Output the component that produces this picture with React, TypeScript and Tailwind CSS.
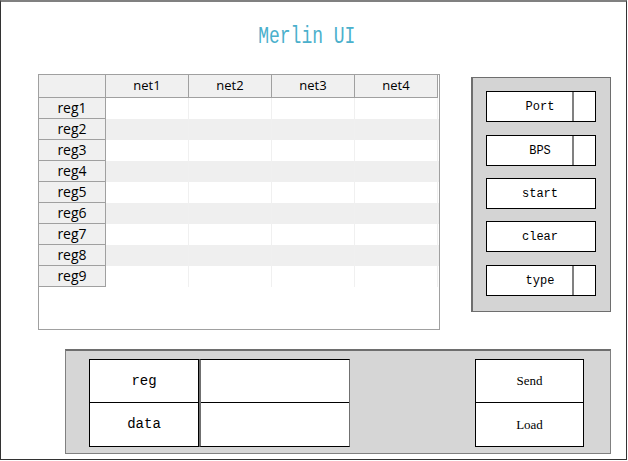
import React from "react";

const cols = ["net1", "net2", "net3", "net4"];
const rows = ["reg1", "reg2", "reg3", "reg4", "reg5", "reg6", "reg7", "reg8", "reg9"];

const mono = { fontFamily: '"Liberation Mono", "DejaVu Sans Mono", monospace' };

// side button, optional little box on the right
const SideButton = ({ label, box, className = "" }: { label: string; box?: boolean; className?: string }) => (
  <div
    className={`relative w-[110px] h-[31px] bg-white border border-black flex items-center justify-center text-[12px] text-black ${className}`}
  >
    <span className="pr-[2px]">{label}</span>
    {box && (
      <div className="absolute right-0 top-0 bottom-0 w-[23px] border-l-2 border-[#808080] bg-white" />
    )}
  </div>
);

const App = () => {
  return (
    <div className="w-[628px] h-[461px] bg-white" style={mono}>
      <div className="w-[627px] h-[460px] border border-[#333] border-t-2 border-t-[#808080]">
        {/* Title */}
        <div className="h-[72px] pt-[20px] pr-[14px] text-center">
          <span className="inline-block scale-x-75 text-[24px] leading-[30px] text-[#4bb0cc]">Merlin UI</span>
        </div>

        {/* Middle area */}
        <div className="flex items-start pl-[37px]">
          {/* Grid table */}
          <div
            className="w-[402px] h-[256px] border border-[#a0a0a0] bg-white text-[13px] text-black"
            style={{ fontFamily: '"Open Sans", "Noto Sans", sans-serif' }}
          >
            <div className="flex h-[23px]">
              <div className="w-[67px] bg-[#f0f0f0] border-r border-b border-[#a0a0a0]" />
              {cols.map((c) => (
                <div
                  key={c}
                  className="w-[83px] bg-[#f0f0f0] border-r border-b border-[#a0a0a0] flex items-center justify-center"
                >
                  {c}
                </div>
              ))}
            </div>
            {rows.map((r, i) => (
              <div key={r} className={`flex h-[21px] ${i % 2 === 1 ? "bg-[#efefef]" : "bg-white"}`}>
                <div className="w-[67px] bg-[#f0f0f0] border-r border-b border-[#a0a0a0] flex items-center justify-center leading-none text-[14px]">
                  {r}
                </div>
                {cols.map((c) => (
                  <div key={c} className="w-[83px] border-r border-[#f0f0f0]" />
                ))}
              </div>
            ))}
          </div>

          {/* Right control panel */}
          <div className="ml-[31px] mt-[3px] w-[140px] h-[235px] bg-[#d4d4d4] border border-[#6e6e6e] border-l-2 pl-[13px] pt-[13px]">
            <SideButton label="Port" box />
            <SideButton label="BPS" box className="mt-[13px]" />
            <SideButton label="start" className="mt-[12px]" />
            <SideButton label="clear" className="mt-[12px]" />
            <SideButton label="type" box className="mt-[13px]" />
          </div>
        </div>

        {/* Bottom panel */}
        <div className="ml-[64px] mt-[19px] w-[546px] h-[105px] bg-[#d6d6d6] border border-[#808080] border-t-2 border-t-[#6e6e6e] flex items-start justify-between pl-[23px] pr-[26px] pt-[8px]">
          <div className="flex">
            <div className="w-[110px] border border-black bg-white">
              <div className="h-[43px] border-b border-black flex items-center justify-center text-[14px]">reg</div>
              <div className="h-[43px] flex items-center justify-center text-[14px]">data</div>
            </div>
            <div className="w-[151px] border border-l-2 border-[#707070] border-y-black bg-white">
              <div className="h-[43px] border-b border-black" />
              <div className="h-[43px]" />
            </div>
          </div>
          <div
            className="w-[109px] border border-black bg-white text-[13px]"
            style={{ fontFamily: '"Liberation Serif", serif' }}
          >
            <div className="h-[43px] border-b border-black flex items-center justify-center">Send</div>
            <div className="h-[43px] flex items-center justify-center">Load</div>
          </div>
        </div>
      </div>
    </div>
  );
};

export default App;
